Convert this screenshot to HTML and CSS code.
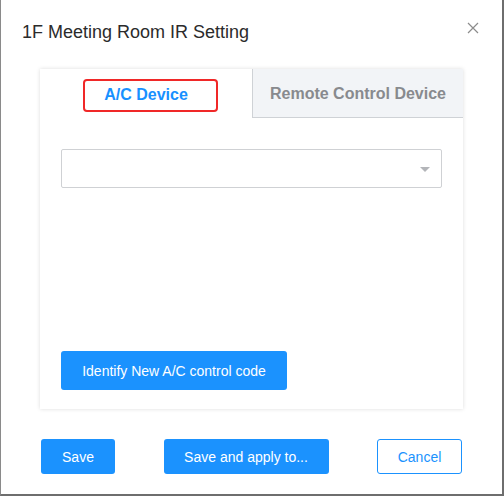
FILE: index.html
```html
<!DOCTYPE html>
<html>
<head>
<meta charset="utf-8">
<link rel="stylesheet" href="styles.css">
</head>
<body>
<div class="dialog">
  <div class="header">
    <div class="title">1F Meeting Room IR Setting</div>
    <svg class="close" width="12" height="12" viewBox="0 0 12 12"><path d="M1 1L11 11M11 1L1 11" stroke="#8c8c8c" stroke-width="1.2" fill="none"/></svg>
  </div>
  <div class="card">
    <div class="tabs">
      <div class="tab active"><span class="tab-label">A/C Device</span><span class="highlight"></span></div>
      <div class="tab inactive"><span class="tab-label">Remote Control Device</span></div>
    </div>
    <div class="card-body">
      <div class="select">
        <span class="caret"></span>
      </div>
      <div class="spacer"></div>
      <button class="btn primary identify">Identify New A/C control code</button>
    </div>
  </div>
  <div class="footer">
    <button class="btn primary save">Save</button>
    <button class="btn primary apply">Save and apply to...</button>
    <button class="btn outline cancel">Cancel</button>
  </div>
</div>
</body>
</html>
```
FILE: styles.css
```css
html, body {
  margin: 0;
  padding: 0;
  background: #ffffff;
}
body {
  font-family: "Liberation Sans", Arial, sans-serif;
}
.dialog {
  width: 504px;
  height: 496px;
  box-sizing: border-box;
  border-left: 1px solid #8a8a8a;
  border-right: 2px solid #6e6e6e;
  border-bottom: 2px solid #6e6e6e;
  background: #fff;
  display: flex;
  flex-direction: column;
}
.header {
  display: flex;
  align-items: center;
  justify-content: space-between;
  padding: 20px 23px 0 21px;
  height: 24px;
}
.title {
  font-size: 18px;
  line-height: 24px;
  color: #2b2b2b;
}
.close {
  margin-top: -8px;
}
.card {
  margin: 25px 0 0 39px;
  width: 423px;
  height: 340px;
  box-shadow: 0 0 4px rgba(0, 0, 0, 0.14);
  display: flex;
  flex-direction: column;
  background: #fff;
}
.tabs {
  display: flex;
  height: 49px;
}
.tab {
  position: relative;
  display: flex;
  align-items: center;
  justify-content: center;
  font-size: 16px;
  font-weight: bold;
  box-sizing: border-box;
  padding-top: 2px;
}
.tab.active {
  width: 212px;
  color: #1890ff;
}
.tab.inactive {
  width: 211px;
  background: #f2f4f7;
  color: #888a8e;
  border-left: 1px solid #cfd2d6;
  border-bottom: 1px solid #cfd2d6;
}
.highlight {
  position: absolute;
  left: 43px;
  top: 10px;
  width: 135px;
  height: 33px;
  box-sizing: border-box;
  border: 2.5px solid #f02828;
  border-radius: 4px;
}
.card-body {
  flex: 1;
  display: flex;
  flex-direction: column;
  padding: 31px 21px 19px 21px;
}
.select {
  height: 39px;
  box-sizing: border-box;
  border: 1px solid #cfd1d4;
  border-radius: 2px;
  position: relative;
}
.caret {
  position: absolute;
  right: 11px;
  top: 17px;
  width: 0;
  height: 0;
  border-left: 5px solid transparent;
  border-right: 5px solid transparent;
  border-top: 5px solid #b3b5b9;
}
.spacer {
  flex: 1;
}
.btn {
  font-family: "Liberation Sans", Arial, sans-serif;
  font-size: 14px;
  border-radius: 3px;
  box-sizing: border-box;
  cursor: pointer;
  padding: 0;
}
.primary {
  background: #1b92fe;
  color: #fff;
  border: none;
}
.outline {
  background: #fff;
  color: #1b92fe;
  border: 1px solid #1b92fe;
}
.identify {
  width: 226px;
  height: 39px;
  align-self: flex-start;
}
.footer {
  display: flex;
  justify-content: space-between;
  padding: 0 40px 0 40px;
  margin-top: 30px;
}
.footer .btn {
  height: 35px;
}
.save {
  width: 74px;
}
.apply {
  width: 165px;
}
.cancel {
  width: 85px;
}
```
